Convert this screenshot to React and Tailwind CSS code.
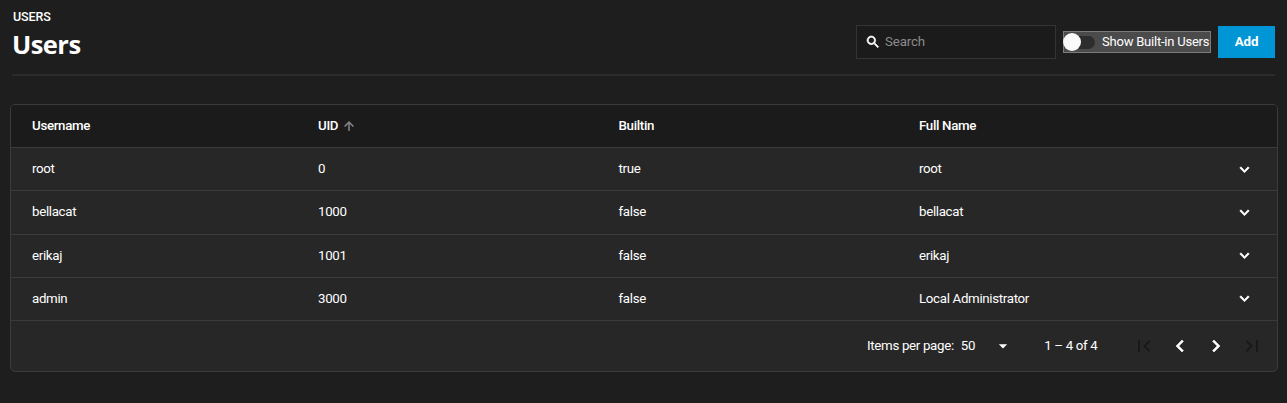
const ICONS = {
  search:
    'M15.5 14h-.79l-.28-.27C15.41 12.59 16 11.11 16 9.5 16 5.91 13.09 3 9.5 3S3 5.91 3 9.5 5.91 16 9.5 16c1.61 0 3.09-.59 4.23-1.57l.27.28v.79l5 4.99L20.49 19l-4.99-5zm-6 0C7.01 14 5 11.99 5 9.5S7.01 5 9.5 5 14 7.01 14 9.5 11.99 14 9.5 14z',
  arrowUp: 'M4 12l1.41 1.41L11 7.83V20h2V7.83l5.58 5.59L20 12l-8-8-8 8z',
  expand: 'M16.59 8.59L12 13.17 7.41 8.59 6 10l6 6 6-6z',
  dropDown: 'M7 10l5 5 5-5z',
  first: 'M18.41 16.59L13.82 12l4.59-4.59L17 6l-6 6 6 6zM6 6h2v12H6z',
  previous: 'M15.41 7.41L14 6l-6 6 6 6 1.41-1.41L10.83 12z',
  next: 'M10 6L8.59 7.41 13.17 12l-4.58 4.59L10 18l6-6z',
  last: 'M5.59 7.41L10.18 12l-4.59 4.59L7 18l6-6-6-6zM16 6h2v12h-2z',
};

const USERS = [
  { username: 'root', uid: 0, builtin: true, fullName: 'root' },
  { username: 'bellacat', uid: 1000, builtin: false, fullName: 'bellacat' },
  { username: 'erikaj', uid: 1001, builtin: false, fullName: 'erikaj' },
  { username: 'admin', uid: 3000, builtin: false, fullName: 'Local Administrator' },
];

function Icon({ name, className, weight = 0 }) {
  return (
    <svg
      viewBox="0 0 24 24"
      fill="currentColor"
      stroke={weight ? 'currentColor' : 'none'}
      strokeWidth={weight}
      aria-hidden="true"
      className={className}
    >
      <path d={ICONS[name]} />
    </svg>
  );
}

function PageHeader() {
  return (
    <header className="mx-3 flex h-[75.5px] shrink-0 items-start justify-between border-b-2 border-[#2b2b2b]">
      <div className="pt-[9px]">
        <div className="pl-px text-[12.5px] leading-4 font-medium tracking-[-0.1px] text-white">USERS</div>
        <h1 className="mt-1 font-['Open_Sans',sans-serif] text-[25.5px] leading-[30px] font-bold tracking-[-0.55px] text-white">
          Users
        </h1>
      </div>
      <div className="flex items-center pt-[25px]">
        <label className="flex h-[34px] w-[200px] items-center border border-[#343434] bg-[#1b1b1b] pl-2">
          <Icon name="search" weight={0.9} className="size-4 text-white" />
          <input
            placeholder="Search"
            className="ml-1 w-36 bg-transparent text-[13.3px] tracking-[-0.15px] text-white outline-none placeholder:text-[#8b8b8b]"
          />
        </label>
        <div className="ml-[7px] flex h-[22px] w-[148px] items-center border border-[#7b7b7b] bg-[#4b4b4b]">
          <div className="-ml-px flex h-[13px] w-8 shrink-0 items-center rounded-full bg-[#2d2d2d]">
            <span className="size-[18px] shrink-0 rounded-full bg-[#fafafa]" />
          </div>
          <span className="ml-[7px] text-[13px] leading-5 tracking-[-0.22px] whitespace-nowrap text-white">
            Show Built-in Users
          </span>
        </div>
        <button className="ml-[7px] h-8 w-[57px] bg-[#0095d5] text-[13.3px] font-bold tracking-[-0.15px] text-white">
          Add
        </button>
      </div>
    </header>
  );
}

const ROW =
  'grid grid-cols-[286px_300.5px_300.5px_1fr_auto] items-center border-b border-[#3b3b3b] pr-[26px] pl-[21px]';

function UsersTable() {
  return (
    <div className="mx-[10px] mt-[28.5px] h-[268px] w-[1268px] shrink-0 overflow-hidden rounded-[5px] border border-[#3b3b3b] bg-[#272727]">
      <div className={`${ROW} h-[43px] bg-[#1b1b1b] font-medium`}>
        <span>Username</span>
        <span className="flex items-center">
          UID
          <Icon name="arrowUp" weight={0.7} className="ml-1 size-[14px] text-[#8b8b8b]" />
        </span>
        <span>Builtin</span>
        <span>Full Name</span>
      </div>
      {USERS.map((user) => (
        <div key={user.username} className={`${ROW} h-[43.25px]`}>
          <span>{user.username}</span>
          <span>{user.uid}</span>
          <span>{String(user.builtin)}</span>
          <span>{user.fullName}</span>
          <Icon name="expand" weight={0.9} className="size-[13px] scale-[1.45]" />
        </div>
      ))}
      <div className="flex h-[50px] items-center pr-[13px] pl-[856px]">
        <span className="whitespace-nowrap">Items per page:</span>
        <span className="ml-[7px]">50</span>
        <Icon name="dropDown" className="ml-[18px] size-5" />
        <span className="-mt-px ml-[31px] whitespace-nowrap">1 – 4 of 4</span>
        <div className="ml-auto flex gap-3">
          <Icon name="first" className="size-6 text-[#191919]" />
          <Icon name="previous" weight={0.6} className="size-6" />
          <Icon name="next" weight={0.6} className="size-6" />
          <Icon name="last" className="size-6 text-[#191919]" />
        </div>
      </div>
    </div>
  );
}

export default function App() {
  return (
    <main className="flex h-[403px] w-[1287px] flex-col overflow-hidden bg-[#1e1e1e] font-['Roboto','Liberation_Sans',sans-serif] text-[13.3px] leading-5 tracking-[-0.32px] text-white">
      <PageHeader />
      <UsersTable />
    </main>
  );
}
